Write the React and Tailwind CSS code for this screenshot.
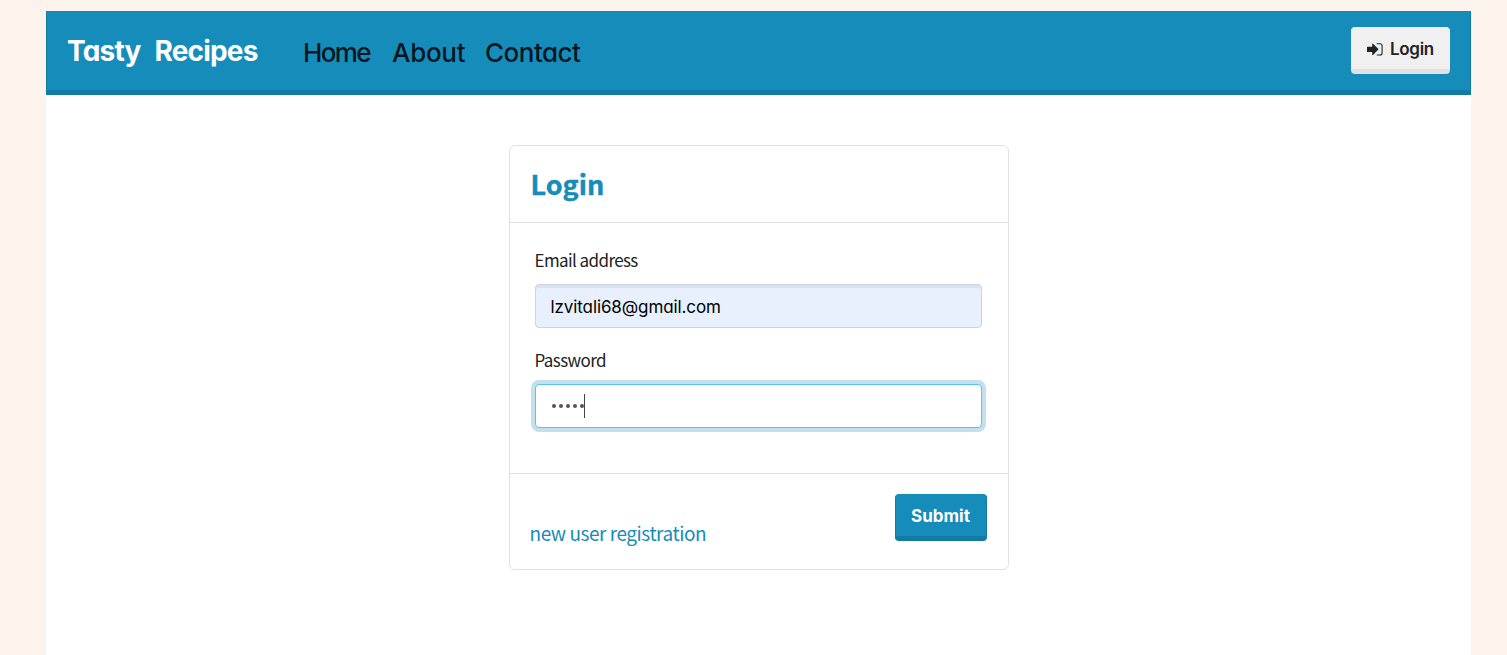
const comic = "font-['Comic_Sans_MS','Inter',sans-serif] [font-feature-settings:'cv11','ss03']";
const sans = "font-['Source_Sans_Pro','Noto_Sans_CJK_SC',sans-serif]";

function SignInIcon() {
  return (
    <svg className="h-[13px] w-4 shrink-0" viewBox="0 0 16 13" fill="none">
      <path d="M0.6 3.7h4.6V1.1a.5.5 0 0 1 .85-.35l5.1 5.1a.7.7 0 0 1 0 1L6.05 12a.5.5 0 0 1-.85-.35V9H.6a.6.6 0 0 1-.6-.6V4.3a.6.6 0 0 1 .6-.6z" fill="#222" />
      <path d="M10.2 .8h2.9a2 2 0 0 1 2 2v7.2a2 2 0 0 1-2 2h-2.9" stroke="#222" strokeWidth="1.1" strokeLinecap="round" />
    </svg>
  );
}

function Navbar() {
  return (
    <nav className={`${comic} flex h-[84px] items-center border border-b-[5px] border-[#127ba3] border-t-[#158cba] bg-[#158cba] pr-5 pl-5`}>
      <a href="#" className="w-[236px] text-[28px] leading-[42px] font-bold tracking-[-0.8px] [word-spacing:8px] whitespace-nowrap text-white">Tasty Recipes</a>
      <div className="flex pt-[3px] text-[26px] leading-[42px] font-medium text-black/85">
        <a href="#" className="w-[89px] tracking-[-1.6px] whitespace-nowrap">Home</a>
        <a href="#" className="w-[93px] tracking-[-0.3px] whitespace-nowrap">About</a>
        <a href="#" className="tracking-[-0.5px] whitespace-nowrap">Contact</a>
      </div>
      <button className="mb-[2px] ml-auto flex h-[47px] w-[99px] items-center gap-[7px] rounded border border-b-[5px] border-[#e1e1e1] border-x-[#efefef] border-t-[#f0f0f0] bg-[#f0f0f0] pt-[2px] pl-[15px] text-[17px] font-semibold tracking-[-0.3px] text-[#222]">
        <SignInIcon />
        <span className="pt-px">Login</span>
      </button>
    </nav>
  );
}

function LoginCard() {
  return (
    <form className={`${sans} mx-auto mt-[50px] flex h-[425px] w-[500px] flex-col rounded-md border border-[#e2e2e2] bg-white`}>
      <header className="flex h-[77px] items-center border-b border-[#e2e2e2] pl-[21px]">
        <h1 className="text-[27px] leading-[34px] font-bold text-[#158cba] [-webkit-text-stroke:0.4px_#158cba]">Login</h1>
      </header>
      <div className="flex h-[251px] flex-col border-b border-[#e2e2e2] pt-6 pr-[26px] pl-[25px]">
        <label className="h-[37px] text-[17px] leading-[26px] tracking-[-0.6px] text-[#222]">Email address</label>
        <div className={`${comic} flex h-[44px] shrink-0 items-center rounded border border-[#ced4da] bg-[#e8f0fe] pt-[3px] pl-[15px] text-[17px] tracking-[-0.1px] text-black shadow-[inset_0_3px_0_rgba(0,0,0,0.06)]`}>
          <span>lzvitali68@gmail.com</span>
        </div>
        <label className="mt-[19px] h-[37px] text-[17px] leading-[26px] tracking-[-0.6px] text-[#222]">Password</label>
        <div className="flex h-[44px] shrink-0 items-center rounded border border-[#5bc2e8] bg-white pl-4 shadow-[0_0_0_4px_#c3e1ed]">
          <span className="flex gap-[3px]">
            <i className="size-1 rounded-full bg-[#555]" />
            <i className="size-1 rounded-full bg-[#555]" />
            <i className="size-1 rounded-full bg-[#555]" />
            <i className="size-1 rounded-full bg-[#555]" />
            <i className="size-1 rounded-full bg-[#555]" />
          </span>
          <span className="h-6 w-px bg-[#444]" />
        </div>
      </div>
      <footer className="flex grow items-start justify-between pt-5 pr-[21px] pl-5">
        <a href="#" className="mt-[25px] text-[19px] leading-[28px] tracking-[-0.45px] text-[#158cba]">new user registration</a>
        <button type="button" className={`${comic} h-[47px] w-[92px] rounded border border-b-[5px] border-[#127ba3] border-t-[#158cba] bg-[#158cba] pt-[3px] text-[17px] font-bold text-white`}>Submit</button>
      </footer>
    </form>
  );
}

export default function App() {
  return (
    <div className="h-[655px] overflow-hidden bg-[#fcf3ed] pt-[11px] pr-[36px] pl-[46px]">
      <main className="h-[644px] bg-white">
        <Navbar />
        <LoginCard />
      </main>
    </div>
  );
}
